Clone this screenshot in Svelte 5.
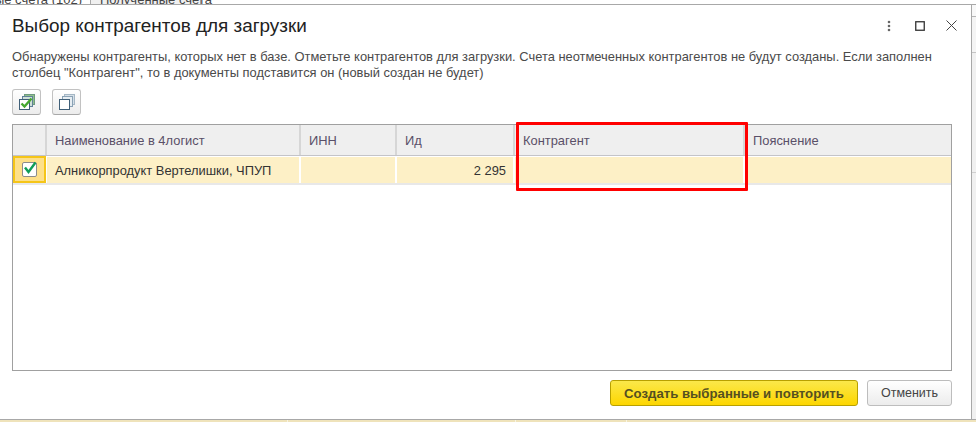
<script lang="ts">
    const columns = [
        { title: "Наименование в 4логист", value: "Алникорпродукт Вертелишки, ЧПУП" },
        { title: "ИНН", value: "" },
        { title: "Ид", value: "2 295", right: true },
        { title: "Контрагент", value: "" },
        { title: "Пояснение", value: "" },
    ];
</script>

<div class="page">
    <div class="behind-top">
        <span class="tab first">чные счета (102)</span>
        <span class="tab second">Полученные счета</span>
    </div>

    <div class="middle">
        <div class="dialog">
            <header class="title-bar">
                <h1>Выбор контрагентов для загрузки</h1>
                <div class="window-actions">
                    <svg class="more" width="4" height="12" viewBox="0 0 4 12">
                        <circle cx="2" cy="2" r="1.3" fill="#666" />
                        <circle cx="2" cy="6" r="1.3" fill="#666" />
                        <circle cx="2" cy="10" r="1.3" fill="#666" />
                    </svg>
                    <svg class="maximize" width="10" height="10" viewBox="0 0 10 10">
                        <rect x="0.75" y="0.75" width="8.5" height="8.5" fill="none" stroke="#333" stroke-width="1.3" />
                    </svg>
                    <svg width="11" height="11" viewBox="0 0 11 11">
                        <path d="M0.5 0.5 L10.5 10.5 M10.5 0.5 L0.5 10.5" stroke="#444" stroke-width="1" fill="none" />
                    </svg>
                </div>
            </header>

            <p class="message">
                Обнаружены контрагенты, которых нет в базе. Отметьте контрагентов для загрузки. Счета неотмеченных контрагентов не будут созданы. Если заполнен<br />
                столбец "Контрагент", то в документы подставится он (новый создан не будет)
            </p>

            <div class="toolbar">
                <button class="tool" aria-label="Отметить все">
                    <svg width="16" height="16" viewBox="0 0 16 16">
                        <rect x="5.5" y="0.5" width="10" height="10" fill="#8fc08a" stroke="#6f9a80" />
                        <rect x="3.5" y="2.5" width="10" height="10" fill="#cfe0d8" stroke="#5f8098" />
                        <rect x="0.5" y="5.5" width="10" height="10" fill="#fff" stroke="#3f5f78" />
                        <path d="M2.5 9.5 L5.5 12.5 L12.5 4.5" fill="none" stroke="#45a82f" stroke-width="2.4" />
                    </svg>
                </button>
                <button class="tool" aria-label="Снять все">
                    <svg width="16" height="16" viewBox="0 0 16 16">
                        <rect x="5.5" y="0.5" width="10" height="10" fill="#d5dfe7" stroke="#a5b7c5" />
                        <rect x="3.5" y="2.5" width="10" height="10" fill="#e6edf2" stroke="#8aa2b5" />
                        <rect x="0.5" y="5.5" width="10" height="10" fill="#fff" stroke="#3f5f78" />
                    </svg>
                </button>
            </div>

            <div class="table">
                <div class="grid head">
                    <div class="cell check-cell"></div>
                    {#each columns as col}
                        <div class="cell">{col.title}</div>
                    {/each}
                </div>
                <div class="grid row">
                    <div class="cell check-cell current">
                        <span class="checkbox">
                            <svg width="14" height="14" viewBox="0 0 14 14">
                                <path d="M2 6.5 L5.5 11 L12.5 1.5" fill="none" stroke="#0f9d58" stroke-width="2.4" />
                            </svg>
                        </span>
                    </div>
                    {#each columns as col}
                        <div class="cell" class:right={col.right}>{col.value}</div>
                    {/each}
                </div>
                <div class="highlight"></div>
            </div>

            <footer class="actions">
                <button class="btn primary">Создать выбранные и повторить</button>
                <button class="btn">Отменить</button>
            </footer>
        </div>
        <div class="behind-right"></div>
    </div>

    <div class="behind-bottom">
        <span class="strip-cell" style="width: 288px"></span>
        <span class="strip-cell" style="width: 228px"></span>
        <span class="strip-cell" style="width: 111px">контрагенты</span>
    </div>
</div>

<style>
    :global(body) {
        margin: 0;
        background: #fff;
    }

    .page {
        width: 976px;
        height: 422px;
        overflow: hidden;
        display: flex;
        flex-direction: column;
        font-family: "Liberation Sans", Arial, sans-serif;
        color: #333;
    }

    .behind-top {
        height: 4px;
        flex: none;
        overflow: hidden;
        display: flex;
        font-size: 13px;
        line-height: 0;
        color: #444;
        background: #fff;
    }

    .tab {
        height: 4px;
        box-sizing: border-box;
        white-space: nowrap;
    }

    .tab.first {
        width: 91px;
        flex: none;
        display: flex;
        justify-content: flex-end;
        padding-right: 8px;
        border-right: 1px solid #aaa;
    }

    .tab.second {
        width: 110px;
        flex: none;
        padding-left: 9px;
        background: #f0f0f0;
        border-right: 1px solid #aaa;
    }

    .middle {
        height: 416px;
        flex: none;
        display: flex;
        border-top: 1px solid #a8a8a8;
        border-bottom: 1px solid #a8a8a8;
        box-sizing: border-box;
    }

    .dialog {
        width: 972px;
        flex: none;
        box-sizing: border-box;
        background: #fff;
        border-right: 1px solid #a8a8a8;
        display: flex;
        flex-direction: column;
    }

    .behind-right {
        flex: 1;
        background: linear-gradient(#f8f8f8 0 11px, #b5b5b5 11px 12px, #f4f4f4 12px 47px, #c4c4c4 47px 48px, #f0f0f0 48px 167px, #d0d0d0 167px 168px, #f0f0f0 168px);
    }

    .behind-bottom {
        flex: 1;
        display: flex;
        background: #efe3bb;
        font-size: 12px;
        line-height: 14px;
        color: #444;
        overflow: hidden;
    }

    .strip-cell {
        box-sizing: border-box;
        flex: none;
        padding-left: 4px;
        border-right: 1px solid #f8f4e4;
        white-space: nowrap;
    }

    .title-bar {
        height: 44px;
        display: flex;
        align-items: center;
        justify-content: space-between;
        padding: 0 14px 0 12px;
        flex: none;
        box-sizing: border-box;
    }

    h1 {
        margin: -2px 0 0;
        font-size: 18.9px;
        font-weight: 400;
        color: #222;
    }

    .window-actions {
        display: flex;
        align-items: center;
        margin-top: -3px;
    }

    .more {
        margin-right: 24px;
    }

    .maximize {
        margin-right: 21px;
    }

    .message {
        margin: 0;
        padding: 0 12px;
        font-size: 12.9px;
        line-height: 16px;
        color: #4a4a4a;
        white-space: nowrap;
    }

    .toolbar {
        display: flex;
        gap: 11px;
        padding: 8px 0 0 12px;
        flex: none;
    }

    .tool {
        width: 29px;
        height: 26px;
        padding: 0;
        box-sizing: border-box;
        border: 1px solid #c2c2c2;
        border-bottom-color: #a8a8a8;
        border-radius: 3px;
        background: linear-gradient(#fff, #ececec);
        display: flex;
        align-items: center;
        justify-content: center;
    }

    .table {
        position: relative;
        width: 940px;
        height: 247px;
        margin: 9px 0 0 12px;
        box-sizing: border-box;
        border: 1px solid #a0a0a0;
        flex: none;
    }

    .grid {
        display: grid;
        grid-template-columns: 34px 254px 96px 118px 230px 1fr;
        font-size: 12.9px;
    }

    .head {
        height: 30px;
        border-bottom: 1px solid #c4c4c8;
        color: #5a5068;
    }

    .head .cell {
        background: #efefef;
        border-right-color: #d6d6d6;
    }

    .row {
        height: 26px;
        margin-top: 1px;
        border-bottom: 2px solid #e8e8e8;
        color: #333;
    }

    .row .cell {
        background: #fdf0c6;
    }

    .cell {
        display: flex;
        align-items: center;
        padding: 0 8px;
        border-right: 2px solid #fff;
        box-sizing: border-box;
        white-space: nowrap;
    }

    .grid .cell:last-child {
        border-right: none;
    }

    .cell.right {
        justify-content: flex-end;
        padding-right: 7px;
    }

    .cell.check-cell {
        padding: 0;
        justify-content: center;
    }

    .row .cell.current {
        margin: -1px 1px 0 0;
        background: #fde08a;
        border: 2px solid #f5c518;
    }

    .checkbox {
        width: 15px;
        height: 15px;
        box-sizing: border-box;
        background: #fff;
        border: 1px solid #8c8c8c;
        border-radius: 2px;
        display: flex;
        align-items: center;
        justify-content: center;
    }

    .checkbox svg {
        flex: none;
        margin-top: -4px;
        margin-left: 1px;
    }

    .highlight {
        position: absolute;
        left: 503px;
        top: -3px;
        width: 226px;
        height: 63px;
        border: 3px solid #f00;
        border-radius: 1px;
    }

    .actions {
        display: flex;
        justify-content: flex-end;
        gap: 9px;
        padding: 9px 19px 0 0;
        flex: none;
    }

    .btn {
        height: 26px;
        width: 85px;
        padding: 0;
        font-family: inherit;
        font-size: 12.5px;
        color: #444;
        border: 1px solid #bdbdbd;
        border-radius: 3px;
        background: linear-gradient(#fff, #ececec);
    }

    .btn.primary {
        width: 248px;
        font-size: 13.2px;
        font-weight: 700;
        color: #555020;
        border-color: #b8a000;
        background: linear-gradient(#fbe84a, #fdd600);
    }
</style>
